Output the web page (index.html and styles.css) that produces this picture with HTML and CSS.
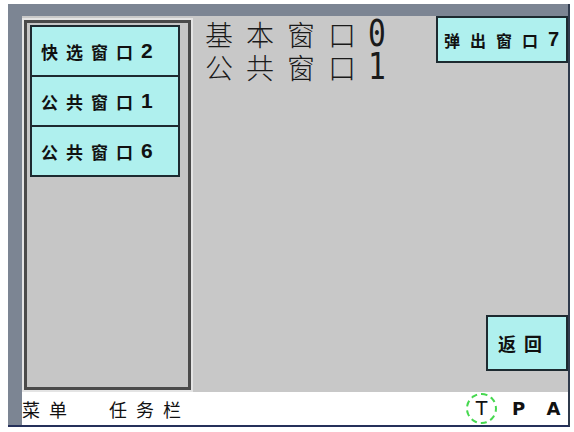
FILE: index.html
```html
<!DOCTYPE html>
<html lang="zh">
<head>
<meta charset="utf-8">
<link rel="stylesheet" href="styles.css">
</head>
<body>
<div class="device">
  <div class="screen">
    <div class="main">
      <div class="panel">
        <div class="btn menu-btn">快选窗口<span class="num">2</span></div>
        <div class="btn menu-btn">公共窗口<span class="num">1</span></div>
        <div class="btn menu-btn">公共窗口<span class="num">6</span></div>
      </div>
      <div class="center">
        <div class="title">基本窗口<span class="big">0</span></div>
        <div class="title">公共窗口<span class="big">1</span></div>
      </div>
      <div class="right">
        <div class="btn popup">弹出窗口<span class="num">7</span></div>
        <div class="btn back">返回</div>
      </div>
    </div>
    <div class="taskbar">
      <div class="tb-left">
        <span class="tb-item">菜单</span>
        <span class="tb-item">任务栏</span>
      </div>
      <div class="tb-right">
        <span class="tp t-ring">T</span>
        <span class="tp">P</span>
        <span class="tp">A</span>
      </div>
    </div>
  </div>
</div>
</body>
</html>
```
FILE: styles.css
```css
html, body {
  margin: 0;
  padding: 0;
  background: #ffffff;
}
body {
  width: 574px;
  height: 432px;
  overflow: hidden;
  font-family: "Noto Sans CJK SC", "Noto Sans", sans-serif;
}
.device {
  margin: 4px 0 0 8px;
  width: 562px;
  height: 423px;
  box-sizing: border-box;
  background: #7c8593;
  padding: 12px 0 0 14px;
  border-right: 2px solid #2f3a4c;
  border-bottom: 2px solid #25305a;
}
.screen {
  width: 546px;
  height: 409px;
  display: flex;
  flex-direction: column;
  background: #c8c8c8;
}
.main {
  flex: 1;
  display: flex;
}
.panel {
  margin: 4px 0 0 2px;
  width: 167px;
  height: 370px;
  box-sizing: border-box;
  border: 3px solid #4a4a4a;
  box-shadow: 0 0 0 2px #e4e4e4;
  padding: 2px 0 0 3px;
  background: #c6c6c6;
}
.btn {
  background: #aff0ee;
  border: 2px solid #1d2a30;
  box-sizing: border-box;
  color: #111;
  font-weight: 700;
  display: flex;
  align-items: center;
}
.menu-btn {
  width: 150px;
  height: 52px;
  padding-left: 9px;
  font-size: 17px;
  letter-spacing: 8px;
}
.menu-btn + .menu-btn {
  margin-top: -2px;
}
.num {
  font-family: "Liberation Sans", sans-serif;
  font-size: 21px;
  font-weight: 700;
  letter-spacing: 0;
}
.center {
  margin-left: 14px;
  padding-top: 1px;
  flex: 1;
}
.title {
  font-size: 28px;
  line-height: 34px;
  letter-spacing: 13px;
  color: #1a1a1a;
  font-weight: 300;
  display: flex;
  align-items: center;
  height: 33px;
}
.big {
  font-family: "DejaVu Sans Mono", monospace;
  font-size: 37px;
  line-height: 30px;
  font-weight: 400;
  letter-spacing: 0;
  display: inline-block;
  transform: scaleX(0.8);
  transform-origin: left center;
  margin-left: -1px;
}
.right {
  width: 132px;
  display: flex;
  flex-direction: column;
  align-items: flex-end;
  justify-content: space-between;
}
.popup {
  width: 132px;
  height: 47px;
  padding-left: 6px;
  font-size: 16px;
  letter-spacing: 10px;
}
.popup .num {
  font-size: 20px;
}
.back {
  width: 82px;
  height: 56px;
  margin-bottom: 21px;
  padding-left: 10px;
  font-size: 18px;
  letter-spacing: 8px;
}
.taskbar {
  height: 33px;
  background: #ffffff;
  display: flex;
  align-items: center;
  justify-content: space-between;
}
.tb-left {
  display: flex;
  gap: 33px;
  font-size: 18px;
  letter-spacing: 9px;
  color: #111;
}
.tb-right {
  display: flex;
  align-items: center;
  margin-right: -3px;
}
.tp {
  font-family: "DejaVu Sans", sans-serif;
  font-weight: 700;
  font-size: 18px;
  color: #111;
  width: 35px;
  text-align: center;
}
.t-ring {
  width: 27px;
  height: 27px;
  line-height: 27px;
  border: 2px dashed #46d84f;
  border-radius: 50%;
  font-weight: 400;
  font-size: 19px;
  margin-right: 4px;
}
```
